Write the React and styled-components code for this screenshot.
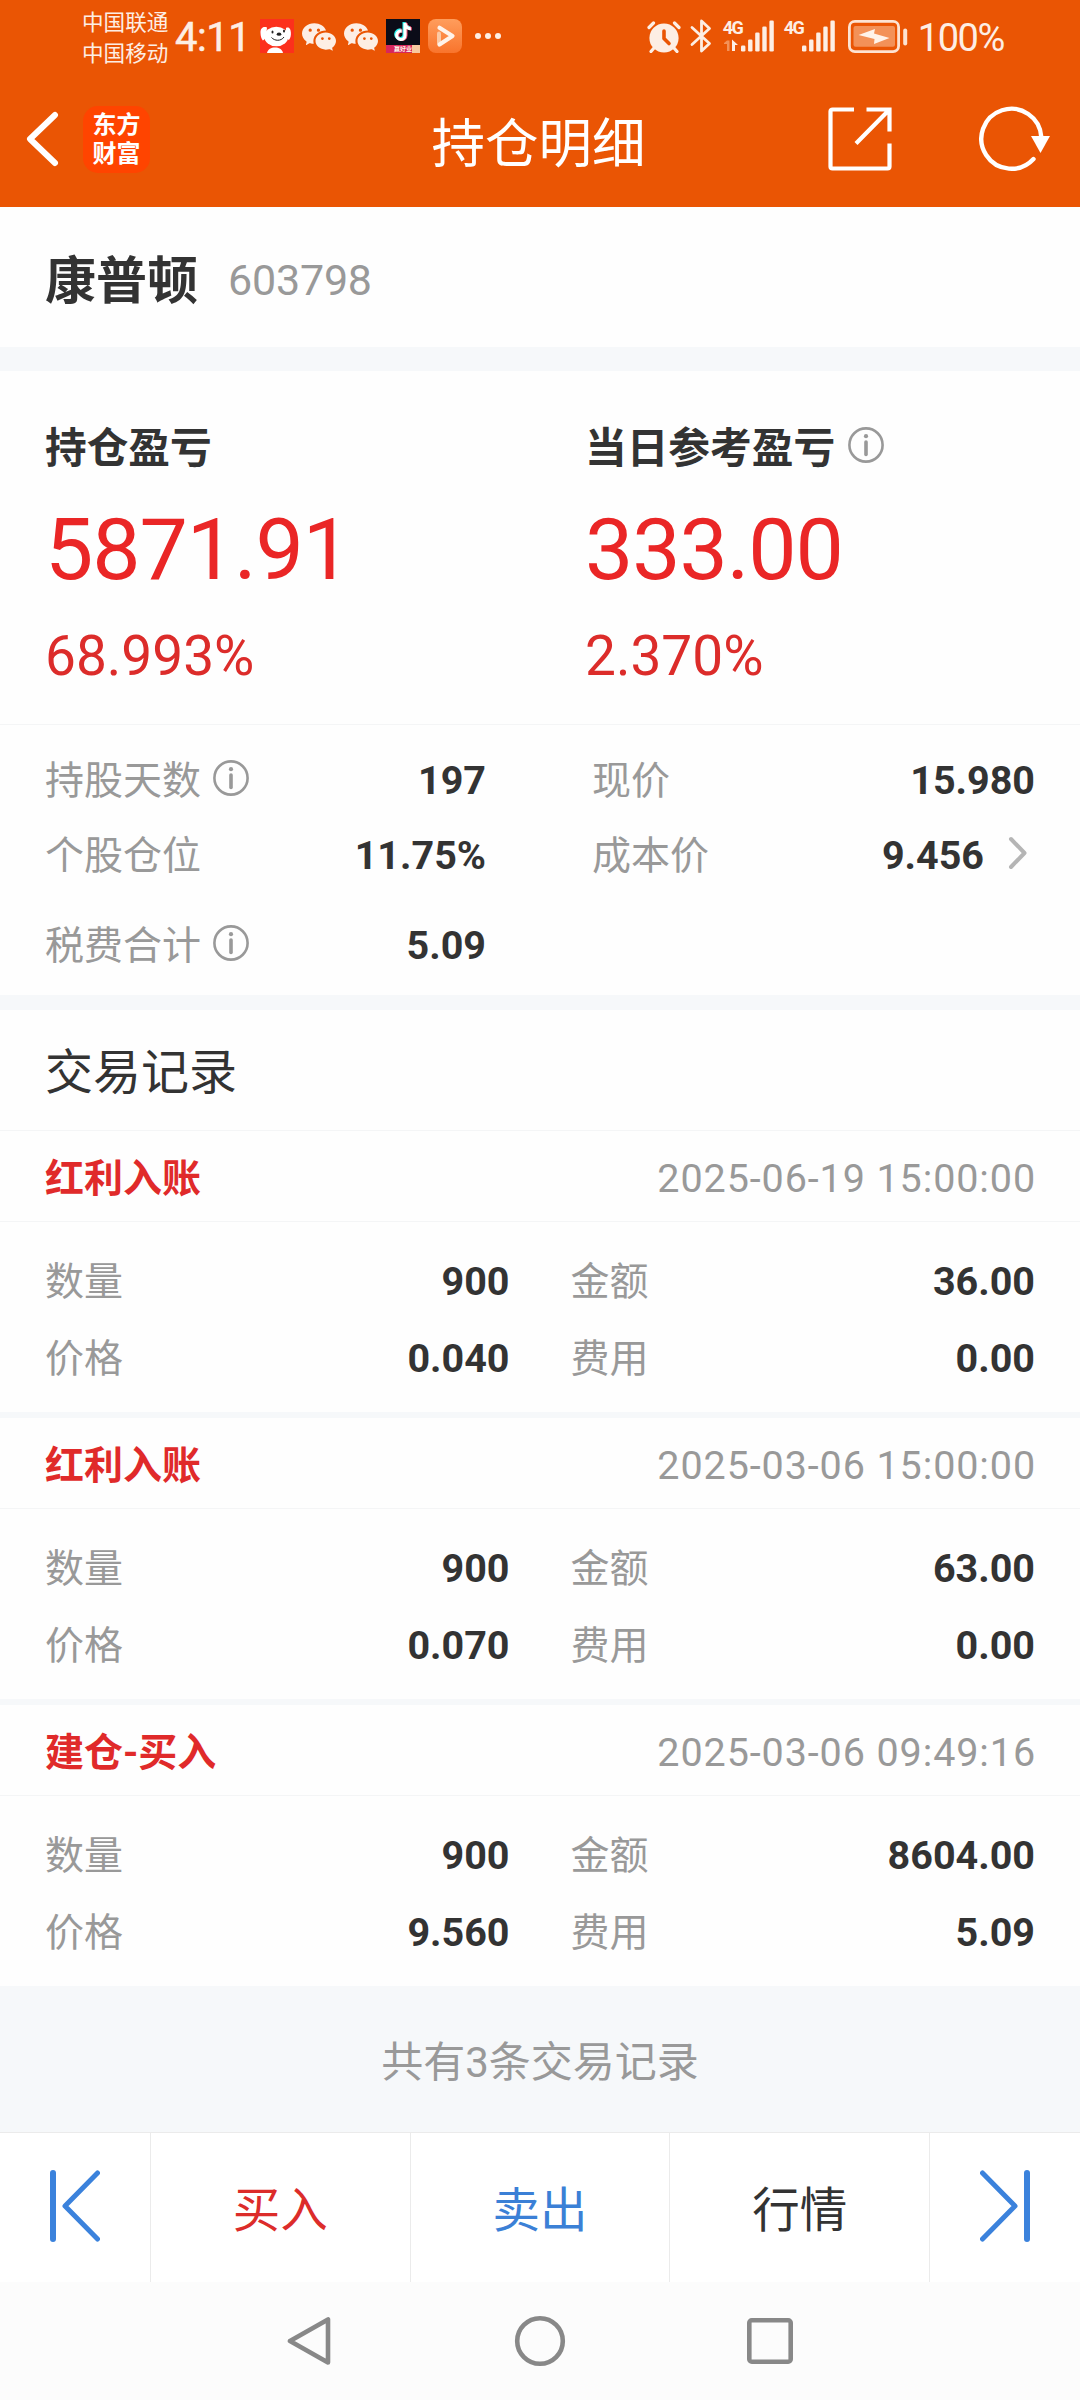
import React from "react";
import styled, { createGlobalStyle } from "styled-components";
import { FaTiktok } from "react-icons/fa";
import { BsWechat } from "react-icons/bs";

const metricsLeft = [
  { label: "持股天数", value: "197", info: true },
  { label: "个股仓位", value: "11.75%" },
  { label: "税费合计", value: "5.09", info: true },
];

const metricsRight = [
  { label: "现价", value: "15.980" },
  { label: "成本价", value: "9.456", more: true },
];

const records = [
  {
    type: "红利入账",
    time: "2025-06-19 15:00:00",
    count: "900",
    amount: "36.00",
    price: "0.040",
    fee: "0.00",
  },
  {
    type: "红利入账",
    time: "2025-03-06 15:00:00",
    count: "900",
    amount: "63.00",
    price: "0.070",
    fee: "0.00",
  },
  {
    type: "建仓-买入",
    time: "2025-03-06 09:49:16",
    count: "900",
    amount: "8604.00",
    price: "9.560",
    fee: "5.09",
  },
];

const InfoIcon = () => (
  <svg width="36" height="36" viewBox="0 0 36 36" fill="none">
    <circle cx="18" cy="18" r="16.6" stroke="#999" strokeWidth="2.6" />
    <circle cx="18" cy="9.2" r="2.1" fill="#999" />
    <path d="M18 15v12.5" stroke="#999" strokeWidth="3.6" strokeLinecap="round" />
  </svg>
);

const JdIcon = () => (
  <svg width="34" height="34" viewBox="0 0 34 34">
    <rect width="34" height="34" fill="#fc301c" />
    <path
      d="M7 8.5C2.500 7 .3 10 .5 14c.1 3 .8 5.500 2.400 7.500 1.800-.8 2.600-2.500 3.200-4.500zM26 9c3.500-1.500 4.600 1.500 4.900 4.500.2 3-.4 5.500-2 7.500-1.600-.6-2.400-2.500-2.900-5z"
      fill="#fff"
    />
    <ellipse cx="16.3" cy="17.5" rx="12" ry="9.8" fill="#fff" />
    <path d="M7 34c1-4 4-5.500 8-5.500s7 1.500 8 5.500z" fill="#fff" />
    <ellipse cx="12.5" cy="13" rx="1" ry="1.5" fill="#222" />
    <ellipse cx="24" cy="12" rx="1" ry="1.5" fill="#222" />
    <ellipse cx="19" cy="15.2" rx="2.3" ry="1.6" fill="#222" />
    <path d="M11.5 18.500c3 3.500 9.500 4 12.500-.5" stroke="#222" strokeWidth="1" fill="none" />
  </svg>
);

const VideoIcon = () => (
  <svg width="34" height="34" viewBox="0 0 34 34" fill="none">
    <defs>
      <linearGradient id="videoBg" x1="0" y1="0" x2="0" y2="1">
        <stop offset="0" stopColor="#ff9d5c" />
        <stop offset="1" stopColor="#f9742c" />
      </linearGradient>
    </defs>
    <rect width="34" height="34" rx="8" fill="url(#videoBg)" />
    <path d="M11 14.500v9.500" stroke="#fbc9a4" strokeWidth="4" strokeLinecap="round" />
    <path
      d="M11.5 8.800L24.500 17L11.500 25.500"
      stroke="#fff3ea"
      strokeWidth="4.2"
      strokeLinecap="round"
      strokeLinejoin="round"
    />
  </svg>
);

const AlarmIcon = () => (
  <svg width="34" height="34" viewBox="0 0 34 34" fill="none">
    <circle cx="17" cy="19" r="14.6" fill="#fdeee4" />
    <path
      d="M2 8.500L6.500 4M32 8.500L27.500 4M7 29l-3 3.500M27 29l3 3.500"
      stroke="#fdeee4"
      strokeWidth="3.2"
      strokeLinecap="round"
    />
    <path
      d="M17 12v7.500l5 5"
      stroke="#ea5504"
      strokeWidth="3.6"
      strokeLinecap="round"
      strokeLinejoin="round"
    />
  </svg>
);

const BluetoothIcon = () => (
  <svg width="22" height="34" viewBox="0 0 22 34" fill="none">
    <path
      d="M2 8.500L19.500 24.500L11.500 32V2L19.500 9.500L2 25.500"
      stroke="#fdeee4"
      strokeWidth="2.8"
      strokeLinecap="round"
      strokeLinejoin="round"
    />
  </svg>
);

const bars = [6, 12, 19, 25, 31];

const SignalBars = () => (
  <svg width="34" height="32" viewBox="0 0 34 32">
    {bars.map((h, i) => (
      <rect key={h} x={i * 7.1} y={31.5 - h} width="4.4" height={h} rx="1.3" fill="#fdeee4" />
    ))}
  </svg>
);

const BatteryIcon = () => (
  <svg width="60" height="33" viewBox="0 0 60 33" fill="none">
    <rect x="1.4" y="1.4" width="49.2" height="30.2" rx="5.5" stroke="#fde3d2" strokeWidth="2.8" />
    <rect x="5.5" y="6" width="41.5" height="20.8" rx="2" fill="#f39158" />
    <path d="M10.5 15L27 9l-1 4.500 15.500 4.500L26 24l.5-5z" fill="#fff3ea" />
    <rect x="55.2" y="8.5" width="4" height="17" rx="2" fill="#fde3d2" />
  </svg>
);

const BackIcon = () => (
  <svg width="33" height="56" viewBox="0 0 33 56" fill="none">
    <path
      d="M29 4L4 28L29 52"
      stroke="#fff"
      strokeWidth="6"
      strokeLinecap="round"
      strokeLinejoin="round"
    />
  </svg>
);

const ShareIcon = () => (
  <svg width="64" height="64" viewBox="0 0 64 64" fill="none" stroke="#fff" strokeWidth="4.2">
    <path d="M26 2.500H4.500a2 2 0 0 0-2 2v55a2 2 0 0 0 2 2h55a2 2 0 0 0 2-2V36.500" />
    <path d="M38.5 2.500H61.500V24.500M61 3L28 36.500" />
  </svg>
);

const RefreshIcon = () => (
  <svg width="72" height="66" viewBox="0 0 72 66" fill="none">
    <path
      d="M62.3 31A30 30 0 1 0 54.500 53"
      stroke="#fff"
      strokeWidth="4.4"
      strokeLinecap="round"
    />
    <path d="M52 30h19L61.500 47z" fill="#fff" />
  </svg>
);

const EdgeIcon = () => (
  <svg width="50" height="72" viewBox="0 0 50 72" fill="none" stroke="#3b82dc">
    <path d="M3 3v66" strokeWidth="6" strokeLinecap="round" />
    <path d="M47.5 3L15 36L47.500 69" strokeWidth="5" strokeLinecap="round" strokeLinejoin="round" />
  </svg>
);

const MetricRow = ({ label, value, info, more }) => (
  <Row>
    <Label>
      {label}
      {info && <InfoIcon />}
    </Label>
    <Value>
      {value}
      {more && (
        <svg width="20" height="34" viewBox="0 0 20 34" fill="none">
          <path
            d="M3 3L16.500 17L3 31"
            stroke="#b5b5b5"
            strokeWidth="4"
            strokeLinecap="round"
            strokeLinejoin="round"
          />
        </svg>
      )}
    </Value>
  </Row>
);

const App = () => {
  return (
    <Page>
      <GlobalStyle />
      <Header>
        <StatusBar>
          <Carriers>
            <span>中国联通</span>
            <span>中国移动</span>
          </Carriers>
          <Clock>4:11</Clock>
          <Notices>
            <JdIcon />
            <BsWechat size={34} />
            <BsWechat size={34} />
            <Douyin>
              <FaTiktok size={18} />
              <small>赢好业</small>
            </Douyin>
            <VideoIcon />
            <svg width="28" height="8" viewBox="0 0 28 8" fill="#fdeee4">
              <circle cx="4" cy="4" r="3" />
              <circle cx="14" cy="4" r="3" />
              <circle cx="24" cy="4" r="3" />
            </svg>
          </Notices>
          <System>
            <AlarmIcon />
            <BluetoothIcon />
            <Signal>
              <Net>
                <span>4G</span>
                <svg width="17" height="14" viewBox="0 0 17 14">
                  <path d="M1 5l3-2.500h2.500V13H4V6H1z" fill="#f39158" />
                  <path d="M9 1.500l6 5.500h-3v6H9z" fill="#fdeee4" />
                </svg>
              </Net>
              <SignalBars />
            </Signal>
            <Signal>
              <Net>
                <span>4G</span>
              </Net>
              <SignalBars />
            </Signal>
            <BatteryIcon />
            <Percent>100%</Percent>
          </System>
        </StatusBar>
        <TitleBar>
          <Side>
            <BackIcon />
            <Logo>
              <span>东方</span>
              <span>财富</span>
            </Logo>
          </Side>
          <Title>持仓明细</Title>
          <Side $end>
            <ShareIcon />
            <RefreshIcon />
          </Side>
        </TitleBar>
      </Header>

      <Stock>
        <h1>康普顿</h1>
        <span>603798</span>
      </Stock>
      <Gap $size={24} />

      <Summary>
        <Profit>
          <h2>持仓盈亏</h2>
          <Amount>5871.91</Amount>
          <Rate>68.993%</Rate>
        </Profit>
        <Profit>
          <h2>
            当日参考盈亏
            <InfoIcon />
          </h2>
          <Amount>333.00</Amount>
          <Rate>2.370%</Rate>
        </Profit>
      </Summary>

      <Metrics>
        <div>
          {metricsLeft.map((item) => (
            <MetricRow key={item.label} {...item} />
          ))}
        </div>
        <div>
          {metricsRight.map((item) => (
            <MetricRow key={item.label} {...item} />
          ))}
        </div>
      </Metrics>
      <Gap $size={15} />

      <SectionTitle>交易记录</SectionTitle>
      {records.map((record, index) => (
        <React.Fragment key={index}>
          {index > 0 && <Gap $size={6} />}
          <RecordHead>
            <h3>{record.type}</h3>
            <time>{record.time}</time>
          </RecordHead>
          <RecordBody>
            <MetricRow label="数量" value={record.count} />
            <MetricRow label="金额" value={record.amount} />
            <MetricRow label="价格" value={record.price} />
            <MetricRow label="费用" value={record.fee} />
          </RecordBody>
        </React.Fragment>
      ))}
      <Total>共有3条交易记录</Total>

      <Actions>
        <EdgeButton>
          <EdgeIcon />
        </EdgeButton>
        <ActionButton $color="#dc2c2a">买入</ActionButton>
        <ActionButton $color="#3b80d6">卖出</ActionButton>
        <ActionButton $color="#333">行情</ActionButton>
        <EdgeButton $flip>
          <EdgeIcon />
        </EdgeButton>
      </Actions>

      <SystemNav>
        <svg width="46" height="52" viewBox="0 0 46 52">
          <path d="M41 4.500v43L3 26z" />
        </svg>
        <svg width="52" height="52" viewBox="0 0 52 52">
          <circle cx="26" cy="26" r="22.8" />
        </svg>
        <svg width="46" height="46" viewBox="0 0 46 46">
          <rect x="2.3" y="2.3" width="41.4" height="41.4" rx="2.5" />
        </svg>
      </SystemNav>
    </Page>
  );
};

const GlobalStyle = createGlobalStyle`
  * {
    box-sizing: border-box;
    margin: 0;
    padding: 0;
  }
  body {
    background: #fefefe;
    font-family: Roboto, "Noto Sans CJK SC", sans-serif;
    color: #333;
  }
  svg {
    display: block;
    flex-shrink: 0;
  }
`;

const Page = styled.main`
  width: 1080px;
  height: 2400px;
  overflow: hidden;
  display: flex;
  flex-direction: column;
  background: #fefefe;
`;

const Header = styled.header`
  height: 207px;
  background: #ea5504;
  color: #fff;
`;

const StatusBar = styled.div`
  height: 72px;
  padding: 0 76px 0 82px;
  display: flex;
  align-items: center;
  color: #fdeee4;
`;

const Carriers = styled.div`
  width: 93px;
  padding-top: 4px;
  display: flex;
  flex-direction: column;
  font-size: 21.6px;
  line-height: 31.5px;
  white-space: nowrap;
`;

const Clock = styled.div`
  width: 85px;
  padding-top: 4px;
  font-size: 40px;
  line-height: 48px;
  letter-spacing: -0.5px;
  -webkit-text-stroke: 0.5px #fdeee4;
`;

const Notices = styled.div`
  display: flex;
  align-items: center;
  gap: 8px;
  svg:last-child {
    margin-left: 4px;
  }
`;

const Douyin = styled.div`
  width: 34px;
  height: 34px;
  background: #0b0c18;
  display: flex;
  flex-direction: column;
  align-items: center;
  justify-content: space-between;
  padding-top: 4px;
  svg:first-child {
    margin: 0;
    color: #fff;
    filter: drop-shadow(-1px -0.5px 0 #25f4ee) drop-shadow(1px 0.5px 0 #e8476a);
  }
  small {
    width: 100%;
    height: 8px;
    font-size: 6px;
    line-height: 8px;
    font-weight: 700;
    text-align: center;
    background: linear-gradient(90deg, #d8265c 75%, #f8c9a0 75%);
  }
`;

const System = styled.div`
  margin-left: auto;
  display: flex;
  align-items: center;
  svg:first-child {
    margin-right: 9px;
  }
`;

const Signal = styled.div`
  display: flex;
  align-items: flex-end;
  margin-left: 11px;
  svg:first-child {
    margin-right: 0;
  }
  & + & {
    margin-left: 9px;
  }
  & + svg {
    margin: 0 10px 0 12px;
  }
`;

const Net = styled.div`
  width: 18px;
  height: 32px;
  display: flex;
  flex-direction: column;
  justify-content: space-between;
  span {
    font-size: 18px;
    line-height: 15px;
    font-weight: 700;
    letter-spacing: -1.5px;
    white-space: nowrap;
  }
`;

const Percent = styled.div`
  padding-top: 4px;
  font-size: 38px;
  line-height: 46px;
  letter-spacing: -1.4px;
`;

const TitleBar = styled.div`
  height: 134px;
  padding: 0 29px 0 26px;
  display: flex;
  align-items: center;
  justify-content: space-between;
`;

const Side = styled.div`
  width: 300px;
  display: flex;
  align-items: center;
  gap: ${({ $end }) => ($end ? "87px" : "24px")};
  justify-content: ${({ $end }) => ($end ? "flex-end" : "flex-start")};
`;

const Logo = styled.div`
  width: 67px;
  height: 67px;
  padding-top: 2px;
  border-radius: 15px;
  background: #ff4400;
  display: flex;
  flex-direction: column;
  align-items: center;
  justify-content: center;
  font-size: 24px;
  line-height: 29px;
  font-weight: 700;
`;

const Title = styled.div`
  padding-top: 11px;
  font-size: 53.5px;
  line-height: 64px;
`;

const Stock = styled.section`
  height: 140px;
  padding: 6px 45px 0;
  display: flex;
  align-items: center;
  h1 {
    padding-top: 3px;
    font-size: 51px;
    font-weight: 700;
    line-height: 64px;
  }
  span {
    margin-left: 30px;
    font-size: 43px;
    line-height: 64px;
    letter-spacing: -0.2px;
    color: #999;
  }
`;

const Gap = styled.div`
  height: ${({ $size }) => $size}px;
  background: #f6f8fa;
`;

const Summary = styled.section`
  height: 354px;
  padding: 47px 0 0 45px;
  display: grid;
  grid-template-columns: 540px 1fr;
  border-bottom: 1px solid #f4f5f6;
`;

const Profit = styled.div`
  h2 {
    padding-top: 1px;
    display: flex;
    align-items: center;
    font-size: 41.7px;
    font-weight: 700;
    line-height: 60px;
  }
  h2 svg {
    margin: -8px 0 0 13px;
  }
`;

const Amount = styled.div`
  margin-top: 23px;
  font-size: 86px;
  line-height: 96px;
  letter-spacing: -1.1px;
  color: #ea2626;
`;

const Rate = styled.div`
  margin-top: 26px;
  font-size: 55px;
  line-height: 64px;
  color: #dc2c2a;
`;

const Row = styled.div`
  height: 50px;
  display: flex;
  align-items: center;
  justify-content: space-between;
`;

const Label = styled.span`
  display: flex;
  align-items: center;
  font-size: 39px;
  line-height: 50px;
  color: #999;
  svg {
    margin: -6px 0 0 12px;
  }
`;

const Value = styled.span`
  display: flex;
  align-items: center;
  font-size: 39.5px;
  line-height: 50px;
  font-weight: 700;
  svg {
    margin: -6px 7px 0 24px;
  }
`;

const Metrics = styled.section`
  height: 270px;
  padding: 31px 45px 0;
  display: grid;
  grid-template-columns: 441px 1fr;
  column-gap: 106px;
  ${Row}:nth-child(2) {
    margin: 25px 0 40px;
  }
`;

const SectionTitle = styled.div`
  height: 121px;
  padding: 6px 45px 0;
  display: flex;
  align-items: center;
  font-size: 48px;
  line-height: 60px;
  border-bottom: 1px solid #f4f5f6;
`;

const RecordHead = styled.div`
  height: 91px;
  padding: 5px 44px 0 45px;
  display: flex;
  align-items: center;
  justify-content: space-between;
  border-bottom: 1px solid #f4f5f6;
  h3 {
    font-size: 39px;
    font-weight: 700;
    line-height: 50px;
    color: #e02a2a;
  }
  time {
    font-size: 39.5px;
    line-height: 50px;
    letter-spacing: 0.9px;
    color: #999;
  }
`;

const RecordBody = styled.div`
  height: 190px;
  padding: 35px 45px 28px;
  display: grid;
  grid-template-columns: 1fr 1fr;
  gap: 27px 61px;
`;

const Total = styled.div`
  height: 146px;
  padding-top: 7px;
  display: flex;
  align-items: center;
  justify-content: center;
  font-size: 42px;
  line-height: 60px;
  color: #999;
  background: #f6f8fa;
`;

const Actions = styled.footer`
  height: 150px;
  display: flex;
  border-top: 1px solid #ebebeb;
  background: #fff;
`;

const EdgeButton = styled.button`
  width: ${({ $flip }) => ($flip ? "151px" : "150px")};
  padding-bottom: 4px;
  display: flex;
  align-items: center;
  justify-content: center;
  border: none;
  border-left: ${({ $flip }) => ($flip ? "1px solid #ebebeb" : "none")};
  background: none;
  svg {
    transform: ${({ $flip }) => ($flip ? "scaleX(-1)" : "none")};
  }
`;

const ActionButton = styled.button`
  flex: 1;
  padding-top: 7px;
  border: none;
  border-left: 1px solid #ebebeb;
  background: none;
  font-family: inherit;
  font-size: 47.5px;
  line-height: 60px;
  color: ${({ $color }) => $color};
`;

const SystemNav = styled.nav`
  height: 118px;
  display: flex;
  align-items: center;
  justify-content: center;
  gap: 181px;
  background: #fcfcfc;
  svg {
    fill: none;
    stroke: #888;
    stroke-width: 4.6px;
    stroke-linejoin: round;
  }
`;

export default App;
